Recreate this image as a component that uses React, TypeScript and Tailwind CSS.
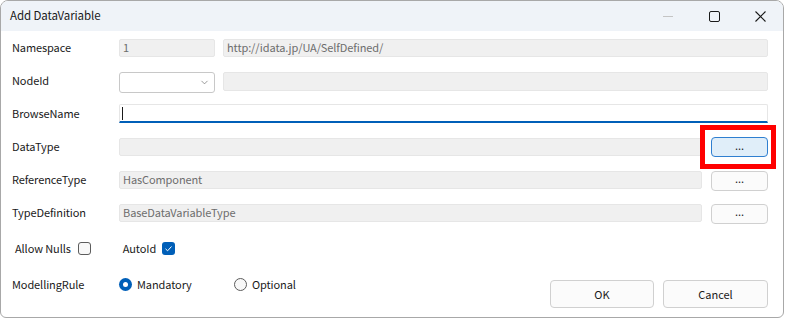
import { ChevronDown } from "lucide-react";

const font = { fontFamily: '"Noto Sans CJK JP", "Noto Sans", sans-serif' };

function Field({ text, className = "" }: { text?: string; className?: string }) {
  return (
    <div
      className={`flex h-[18px] items-center rounded-[2px] border border-[#e6e6e6] bg-[#f0f0f0] px-[3px] text-[11px] tracking-[-0.1px] text-[#6d6d6d] ${className}`}
    >
      {text}
    </div>
  );
}

function DotsButton({ active = false }: { active?: boolean }) {
  return (
    <button
      className={`flex h-[20px] w-[57px] shrink-0 items-center justify-center rounded-[4px] border pb-[4px] text-[11px] text-[#1a1a1a] ${
        active ? "border-[#2f7fd0] bg-[#e0eef9]" : "border-[#d0d0d0] bg-[#fbfbfb]"
      }`}
    >
      ...
    </button>
  );
}

function Label({ children }: { children: string }) {
  return <div className="w-[107px] shrink-0 text-[11px] tracking-[-0.1px] text-[#1a1a1a]">{children}</div>;
}

export default function App() {
  return (
    <div className="h-[320px] w-[786px] overflow-hidden bg-white" style={font}>
      <div className="h-[318px] w-[784px] overflow-hidden rounded-t-[8px] rounded-b-[6px] border border-[#a8a8a8] bg-white">
        {/* title bar */}
        <div className="flex h-[30px] items-center bg-[#eff3f8] pl-[9px]">
          <span className="text-[11.5px] tracking-[-0.1px] text-[#1a1a1a]">Add DataVariable</span>
          <div className="ml-auto flex items-center">
            <div className="flex w-[46px] justify-center">
              <div className="h-px w-[10px] bg-[#c4c4c4]" />
            </div>
            <div className="flex w-[46px] justify-center">
              <div className="h-[11px] w-[11px] rounded-[2px] border border-[#1a1a1a]" />
            </div>
            <div className="flex w-[46px] justify-center">
              <svg width="11" height="11" viewBox="0 0 11 11">
                <path d="M0.5 0.5L10.5 10.5M10.5 0.5L0.5 10.5" stroke="#1a1a1a" strokeWidth="1.1" />
              </svg>
            </div>
          </div>
        </div>

        <div className="pl-[11px] pr-[15px]">
          <div className="flex h-[33px] items-center">
            <Label>Namespace</Label>
            <Field text="1" className="w-[96px]" />
            <Field text="http://idata.jp/UA/SelfDefined/" className="ml-[8px] flex-1" />
          </div>

          <div className="flex h-[33px] items-center">
            <Label>NodeId</Label>
            <div className="mt-[3px] flex h-[21px] w-[96px] items-center justify-end rounded-[3px] border border-[#c8c8c8] bg-white pr-[4px]">
              <ChevronDown className="h-[11px] w-[11px] text-[#6d6d6d]" strokeWidth={1.5} />
            </div>
            <Field className="ml-[8px] mt-[1px] h-[19px] flex-1" />
          </div>

          <div className="flex h-[33px] items-center">
            <Label>BrowseName</Label>
            <div className="flex h-[19px] flex-1 items-center rounded-t-[2px] border border-b-2 border-[#e6e6e6] border-b-[#005fb8] bg-white pl-[2px]">
              <div className="h-[13px] w-px bg-[#1a1a1a]" />
            </div>
          </div>

          <div className="flex h-[33px] items-center">
            <Label>DataType</Label>
            <Field className="flex-1" />
            <div className="relative ml-[9px] mt-[1px]">
              <DotsButton active />
              <div className="pointer-events-none absolute -bottom-[12px] -left-[11px] -right-[8px] -top-[12px] border-[5px] border-[#ff0000]" />
            </div>
          </div>

          <div className="flex h-[33px] items-center">
            <Label>ReferenceType</Label>
            <Field text="HasComponent" className="flex-1" />
            <div className="ml-[9px] mt-[2px]">
              <DotsButton />
            </div>
          </div>

          <div className="flex h-[33px] items-center">
            <Label>TypeDefinition</Label>
            <Field text="BaseDataVariableType" className="flex-1" />
            <div className="ml-[9px] mt-[2px]">
              <DotsButton />
            </div>
          </div>

          <div className="flex h-[39px] items-center text-[11px] tracking-[-0.1px] text-[#1a1a1a]">
            <span className="ml-[3px]">Allow Nulls</span>
            <div className="ml-[7px] h-[13px] w-[13px] rounded-[3px] border border-[#5c5c5c] bg-[#f8f8f8]" />
            <span className="ml-[32px]">AutoId</span>
            <div className="ml-[6px] flex h-[13px] w-[13px] items-center justify-center rounded-[3px] bg-[#005fb8]">
              <svg width="9" height="9" viewBox="0 0 9 9">
                <path d="M1.5 4.8L3.6 6.8L7.5 2.5" stroke="#fff" strokeWidth="1" fill="none" />
              </svg>
            </div>
          </div>

          <div className="flex items-start">
            <div className="flex h-[32px] items-center text-[11px] tracking-[-0.1px] text-[#1a1a1a]">
              <Label>ModellingRule</Label>
              <div className="flex h-[13px] w-[13px] items-center justify-center rounded-full bg-[#005fb8]">
                <div className="h-[5px] w-[5px] rounded-full bg-white" />
              </div>
              <span className="ml-[5px] w-[97px]">Mandatory</span>
              <div className="h-[13px] w-[13px] rounded-full border border-[#5c5c5c] bg-[#f8f8f8]" />
              <span className="ml-[5px]">Optional</span>
            </div>
            <div className="ml-auto mt-[12px] flex gap-[9px]">
              <button className="h-[28px] w-[104px] rounded-[4px] border border-[#d0d0d0] bg-[#fbfbfb] text-[11px] text-[#1a1a1a]">
                OK
              </button>
              <button className="h-[28px] w-[105px] rounded-[4px] border border-[#d0d0d0] bg-[#fbfbfb] text-[11px] text-[#1a1a1a]">
                Cancel
              </button>
            </div>
          </div>
        </div>
      </div>
    </div>
  );
}
